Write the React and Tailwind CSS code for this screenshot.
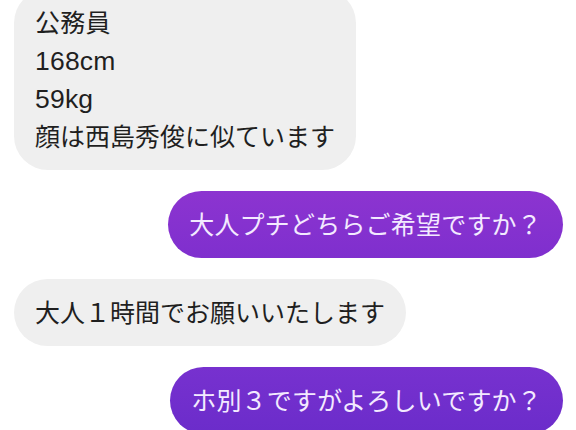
export default function App() {
  const bubble = "rounded-[34px] py-[14.5px] px-[21px] text-[25px] tracking-[0.2px] leading-[38px] whitespace-nowrap";

  return (
    <div
      className="w-[576px] h-[430px] overflow-hidden bg-white flex flex-col gap-[21px] pl-[14px] pr-[13px]"
      style={{ fontFamily: '"Liberation Sans", "Noto Sans CJK JP", sans-serif' }}
    >
      {/* incoming: profile */}
      <div className={`${bubble} self-start -mt-[11px] bg-[#efefef] text-[#1f1f1f]`}>
        <div>公務員</div>
        <div className="text-[26.5px]">168cm</div>
        <div className="text-[26.5px]">59kg</div>
        <div className="tracking-normal">顔は西島秀俊に似ています</div>
      </div>

      {/* outgoing */}
      <div className={`${bubble} self-end bg-gradient-to-b from-[#8c34d0] to-[#7f2fce] text-[#f3eaff]`}>
        大人プチどちらご希望ですか？
      </div>

      {/* incoming */}
      <div className={`${bubble} self-start bg-[#efefef] text-[#1f1f1f] tracking-normal`}>
        大人１時間でお願いいたします
      </div>

      {/* outgoing */}
      <div className={`${bubble} self-end bg-gradient-to-b from-[#7731cf] to-[#6b2cca] text-[#f3eaff]`}>
        ホ別３ですがよろしいですか？
      </div>
    </div>
  );
}
